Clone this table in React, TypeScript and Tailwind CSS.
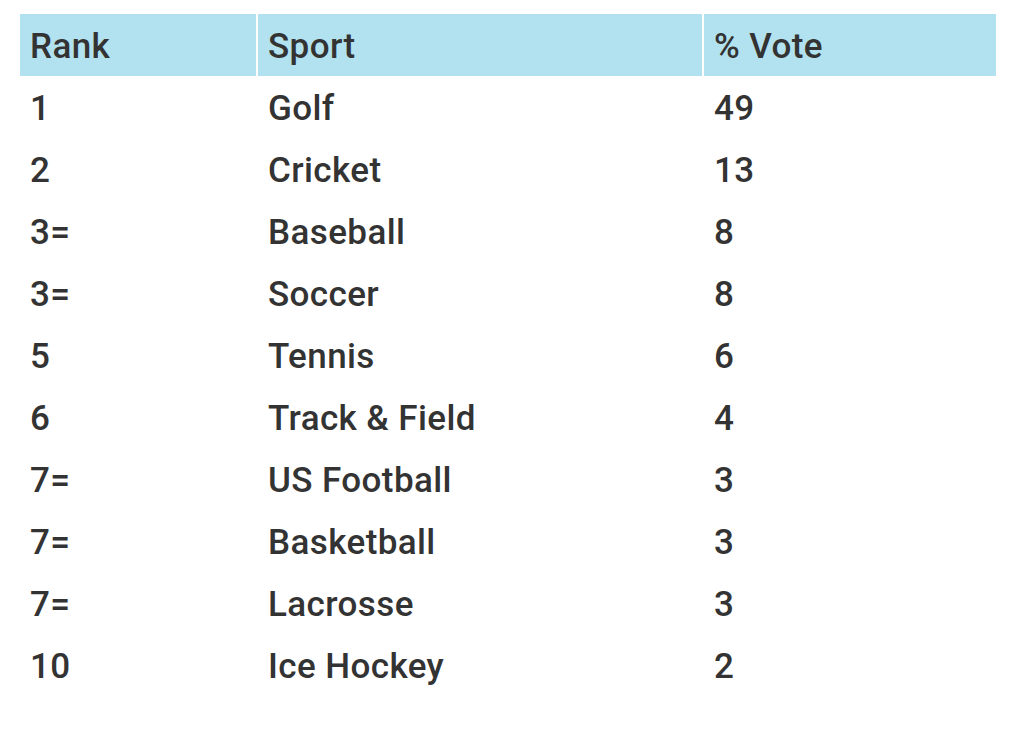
import React from "react";

const rows: [string, string, string][] = [
  ["1", "Golf", "49"],
  ["2", "Cricket", "13"],
  ["3=", "Baseball", "8"],
  ["3=", "Soccer", "8"],
  ["5", "Tennis", "6"],
  ["6", "Track & Field", "4"],
  ["7=", "US Football", "3"],
  ["7=", "Basketball", "3"],
  ["7=", "Lacrosse", "3"],
  ["10", "Ice Hockey", "2"],
];

export default function App() {
  return (
    <div
      className="w-[1010px] h-[732px] bg-white pt-[14px] pl-[20px] text-[#333333] text-[35px] font-medium tracking-[0.4px]"
      style={{ fontFamily: "Roboto, 'Liberation Sans', sans-serif" }}
    >
      <div className="grid grid-cols-[236px_444px_292px] gap-x-[2px] w-[976px]">
        {["Rank", "Sport", "% Vote"].map((h) => (
          <div key={h} className="h-[62px] bg-[#b2e2ef] flex items-center pl-[10px] pt-[4px]">
            {h}
          </div>
        ))}
        {rows.map((r, i) =>
          r.map((c, j) => (
            <div key={`${i}-${j}`} className="h-[62px] flex items-center pl-[10px] pt-[4px]">
              {c}
            </div>
          ))
        )}
      </div>
    </div>
  );
}
